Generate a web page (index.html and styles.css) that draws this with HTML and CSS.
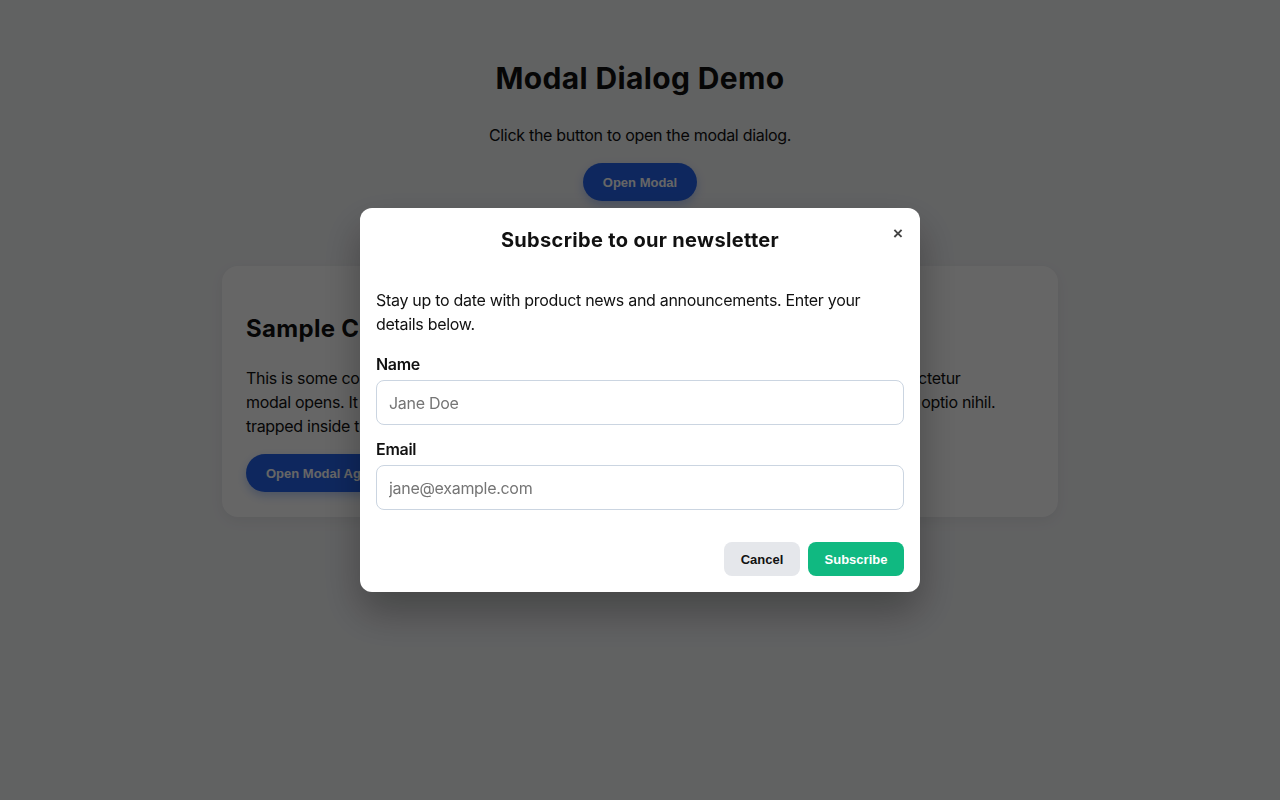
FILE: index.html
```html
<!DOCTYPE html>
<html lang="en">
<head>
<meta charset="utf-8">
<title>Modal Dialog Demo</title>
<link rel="stylesheet" href="styles.css">
</head>
<body>
<main class="page">
  <h1 class="page-title">Modal Dialog Demo</h1>
  <p class="page-lead">Click the button to open the modal dialog.</p>
  <button class="btn-primary" type="button">Open Modal</button>

  <section class="card">
    <h2 class="card-title">Sample Content Behind the Modal</h2>
    <p class="card-text">This is some content that sits on page behind the overlay. Lorem ipsum dolor sit amet, consectetur<br>modal opens. It cannot be reached while the dialog is shown. Voluptates quaerat, tenetur, et, optio nihil.<br>trapped inside the dialog.</p>
    <button class="btn-primary" type="button">Open Modal Again</button>
  </section>
</main>

<div class="overlay">
  <div class="modal" role="dialog" aria-modal="true" aria-labelledby="modal-title">
    <header class="modal-header">
      <h2 id="modal-title" class="modal-title">Subscribe to our newsletter</h2>
      <button class="modal-close" type="button" aria-label="Close">&times;</button>
    </header>
    <div class="modal-body">
      <p class="modal-text">Stay up to date with product news and announcements. Enter your details below.</p>
      <form class="form">
        <label class="field">
          <span class="field-label">Name</span>
          <input class="field-input" type="text" placeholder="Jane Doe">
        </label>
        <label class="field">
          <span class="field-label">Email</span>
          <input class="field-input" type="email" placeholder="jane@example.com">
        </label>
      </form>
    </div>
    <footer class="modal-footer">
      <button class="btn-secondary" type="button">Cancel</button>
      <button class="btn-success" type="button">Subscribe</button>
    </footer>
  </div>
</div>
</body>
</html>
```
FILE: styles.css
```css
* { box-sizing: border-box; }

html, body { height: 100%; }

body {
  margin: 0;
  background: #f3f4f6;
  color: #111;
  font-family: Inter, "Noto Sans", "Liberation Sans", sans-serif;
  font-size: 16px;
  line-height: 24px;
  letter-spacing: -0.3px;
}

.page {
  display: flex;
  flex-direction: column;
  align-items: center;
  padding-top: 60px;
}

.page-title {
  margin: 0;
  font-size: 30px;
  line-height: 36px;
  font-weight: 700;
  letter-spacing: 0.35px;
}

.page-lead {
  margin: 27px 0 16px;
}

.btn-primary {
  height: 38px;
  padding: 0 20px;
  border: none;
  border-radius: 999px;
  background: #2563eb;
  color: #fff;
  font-family: "Liberation Sans", Arial, sans-serif;
  font-size: 13px;
  font-weight: 700;
  letter-spacing: 0;
  box-shadow: 0 4px 10px rgba(37, 99, 235, 0.3);
  cursor: pointer;
}

.card {
  width: 836px;
  margin-top: 65px;
  padding: 24px 24px 25px;
  background: #fff;
  border-radius: 16px;
  box-shadow: 0 4px 14px rgba(0, 0, 0, 0.06);
  text-align: left;
}

.card-title {
  margin: 23px 0 21px;
  font-size: 24px;
  line-height: 32px;
  font-weight: 700;
  letter-spacing: 0.3px;
}

.card-text {
  margin: 0 0 16px;
  white-space: nowrap;
}

.overlay {
  position: fixed;
  inset: 0;
  background: rgba(0, 0, 0, 0.6);
  display: flex;
  justify-content: center;
  align-items: flex-start;
  padding-top: 208px;
}

.modal {
  width: 560px;
  background: #fff;
  border-radius: 12px;
  box-shadow: 0 20px 40px rgba(0, 0, 0, 0.3);
  padding: 16px;
}

.modal-header {
  position: relative;
  display: flex;
  justify-content: center;
  padding: 2px 0 0;
}

.modal-title {
  margin: 0;
  font-size: 20px;
  line-height: 28px;
  font-weight: 700;
  letter-spacing: 0.33px;
}

.modal-close {
  position: absolute;
  right: -4px;
  top: 0;
  width: 20px;
  height: 20px;
  padding: 0;
  border: none;
  background: transparent;
  color: #444;
  font-family: "Liberation Sans", Arial, sans-serif;
  font-size: 17px;
  font-weight: 700;
  line-height: 18px;
  cursor: pointer;
}

.modal-body {
  padding-top: 34px;
}

.modal-text {
  margin: 0 0 16px;
}

.form {
  display: flex;
  flex-direction: column;
  gap: 12px;
}

.field {
  display: flex;
  flex-direction: column;
  gap: 4px;
}

.field-label {
  font-weight: 600;
}

.field-input {
  height: 45px;
  padding: 0 12px;
  border: 1px solid #cbd5e1;
  border-radius: 8px;
  font-family: Inter, "Noto Sans", "Liberation Sans", sans-serif;
  font-size: 16px;
  letter-spacing: -0.3px;
  color: #111;
  background: #fff;
}

.field-input::placeholder { color: #757575; }

.modal-footer {
  display: flex;
  justify-content: flex-end;
  gap: 8px;
  margin-top: 32px;
}

.btn-secondary,
.btn-success {
  height: 34px;
  border: none;
  border-radius: 8px;
  font-family: "Liberation Sans", Arial, sans-serif;
  font-size: 13px;
  font-weight: 700;
  letter-spacing: 0;
  cursor: pointer;
}

.btn-secondary {
  width: 76px;
  background: #e5e7eb;
  color: #111;
}

.btn-success {
  width: 96px;
  background: #10b981;
  color: #fff;
}
```
